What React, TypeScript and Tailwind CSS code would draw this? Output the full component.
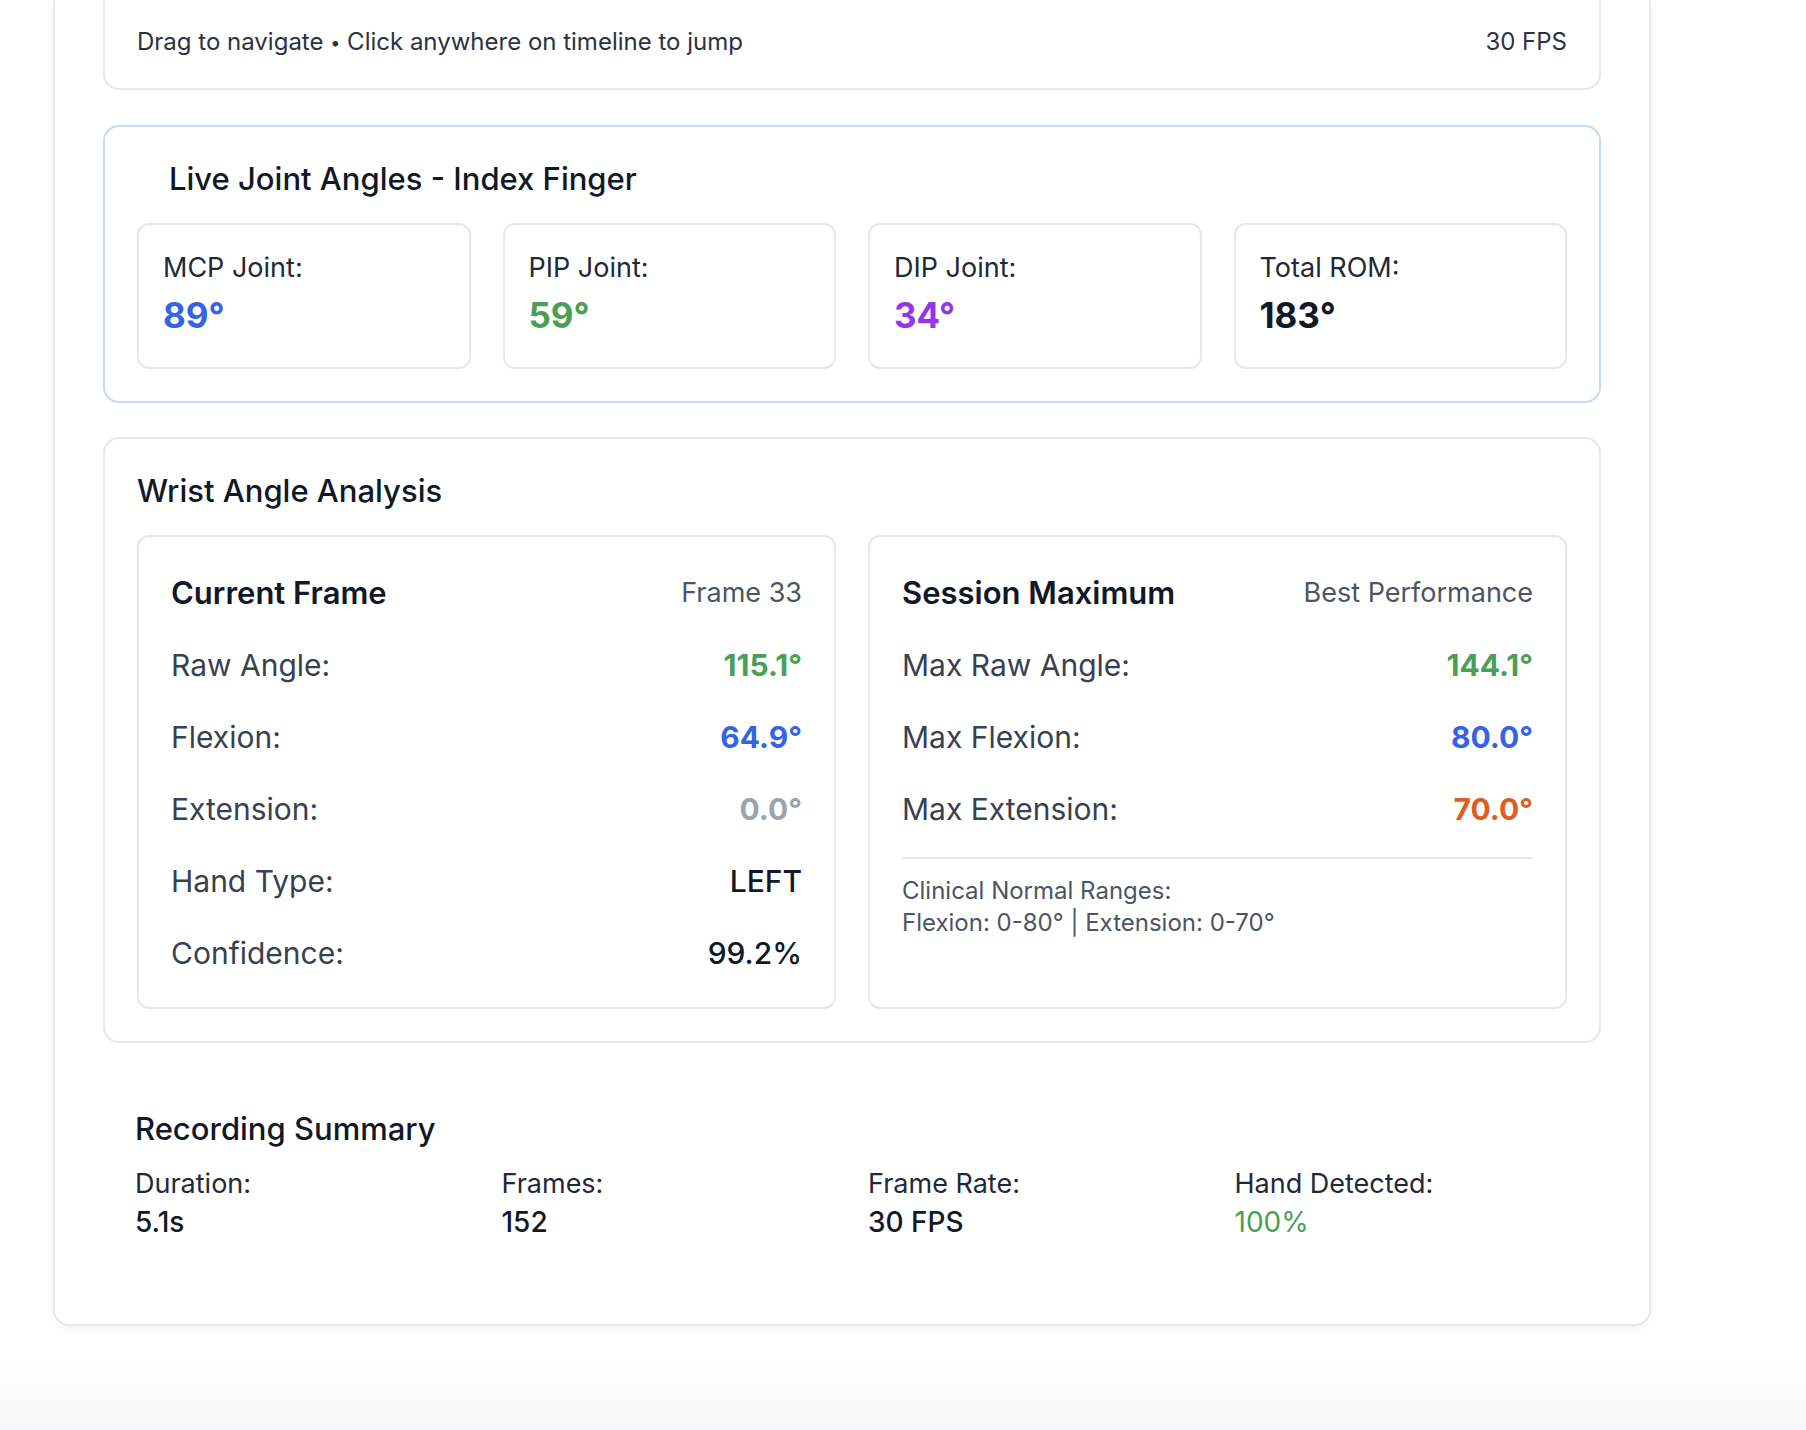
const font = { fontFamily: "Inter, 'Noto Sans', sans-serif" };

const joints = [
    { label: "MCP Joint:", value: "89°", color: "text-[#3563e6]" },
    { label: "PIP Joint:", value: "59°", color: "text-[#4a9f56]" },
    { label: "DIP Joint:", value: "34°", color: "text-[#9336ea]" },
    { label: "Total ROM:", value: "183°", color: "text-[#111827]" },
];

const current = [
    { label: "Raw Angle:", value: "115.1°", cls: "font-bold text-[#4a9f56]" },
    { label: "Flexion:", value: "64.9°", cls: "font-bold text-[#3563e6]" },
    { label: "Extension:", value: "0.0°", cls: "font-bold text-[#9ca3af]" },
    { label: "Hand Type:", value: "LEFT", cls: "font-medium text-[#111827]" },
    { label: "Confidence:", value: "99.2%", cls: "font-medium text-[#111827]" },
];

const session = [
    { label: "Max Raw Angle:", value: "144.1°", cls: "text-[#4a9f56]" },
    { label: "Max Flexion:", value: "80.0°", cls: "text-[#3563e6]" },
    { label: "Max Extension:", value: "70.0°", cls: "text-[#e05d1e]" },
];

const summary = [
    { label: "Duration:", value: "5.1s", cls: "font-medium text-[#111827]" },
    { label: "Frames:", value: "152", cls: "font-medium text-[#111827]" },
    { label: "Frame Rate:", value: "30 FPS", cls: "font-medium text-[#111827]" },
    { label: "Hand Detected:", value: "100%", cls: "text-[#4a9f56]" },
];

function StatRow({ label, value, cls }: { label: string; value: string; cls: string }) {
    return (
        <div className="flex items-center justify-between h-[48px]">
            <span className="text-[30px] text-[#374151]">{label}</span>
            <span className={`text-[30px] ${cls}`}>{value}</span>
        </div>
    );
}

export default function App() {
    return (
        <div
            className="min-h-[1430px] bg-linear-to-b from-white from-95% to-[#f7f7f9]"
            style={font}
        >
            <div className="ml-[53px] w-[1598px] bg-white border-2 border-t-0 border-[#e8e8ec] rounded-b-[16px] shadow-[0_3px_8px_rgba(0,0,0,0.05)] px-12 pb-12 flex flex-col">
                {/* Timeline footer (card scrolled off the top) */}
                <div className="border-2 border-t-0 border-[#e5e7eb] rounded-b-[16px] px-8 pt-[26px] pb-[30px] flex items-center justify-between text-[24px] leading-[32px] text-[#2b3240]">
                    <span>
                        Drag to navigate <span className="text-[18px] leading-none align-[1px]">•</span> Click anywhere on timeline to jump
                    </span>
                    <span>30 FPS</span>
                </div>

                {/* Live joint angles */}
                <div className="mt-[35px] border-2 border-[#c3dbfa] rounded-[16px] p-8">
                    <h3 className="pl-8 text-[31px] leading-[40px] font-medium text-[#111827] mb-6">
                        Live Joint Angles - Index Finger
                    </h3>
                    <div className="grid grid-cols-4 gap-8">
                        {joints.map((j) => (
                            <div key={j.label} className="border-2 border-[#e5e7eb] rounded-[12px] p-6">
                                <div className="text-[27px] leading-[38px] text-[#1f2937]">{j.label}</div>
                                <div className={`text-[35px] leading-[56px] font-bold ${j.color}`}>{j.value}</div>
                            </div>
                        ))}
                    </div>
                </div>

                {/* Wrist angle analysis */}
                <div className="mt-[34px] border-2 border-[#e5e7eb] rounded-[16px] p-8">
                    <h3 className="text-[31px] leading-[40px] font-medium text-[#111827] mb-6">
                        Wrist Angle Analysis
                    </h3>
                    <div className="grid grid-cols-2 gap-8">
                        <div className="border-2 border-[#e5e7eb] rounded-[12px] px-8 pt-8 pb-[30px]">
                            <div className="flex items-center justify-between h-[48px] mb-6">
                                <span className="text-[31px] font-semibold text-[#111827]">Current Frame</span>
                                <span className="text-[27px] text-[#4b5563]">Frame 33</span>
                            </div>
                            <div className="flex flex-col gap-6">
                                {current.map((r) => (
                                    <StatRow key={r.label} {...r} />
                                ))}
                            </div>
                        </div>

                        <div className="border-2 border-[#e5e7eb] rounded-[12px] px-8 pt-8 pb-[30px]">
                            <div className="flex items-center justify-between h-[48px] mb-6">
                                <span className="text-[31px] font-semibold text-[#111827]">Session Maximum</span>
                                <span className="text-[27px] text-[#4b5563]">Best Performance</span>
                            </div>
                            <div className="flex flex-col gap-6">
                                {session.map((r) => (
                                    <StatRow key={r.label} label={r.label} value={r.value} cls={`font-bold ${r.cls}`} />
                                ))}
                            </div>
                            <div className="mt-6 pt-4 border-t-2 border-[#e5e7eb] text-[24px] leading-[32px] text-[#4b5563]">
                                <p>Clinical Normal Ranges:</p>
                                <p>Flexion: 0-80° | Extension: 0-70°</p>
                            </div>
                        </div>
                    </div>
                </div>

                {/* Recording summary */}
                <div className="mt-8 px-8 pt-8 pb-[34px]">
                    <h3 className="text-[31px] leading-[44px] font-medium text-[#111827] mb-[15px]">
                        Recording Summary
                    </h3>
                    <div className="grid grid-cols-4 gap-8">
                        {summary.map((s) => (
                            <div key={s.label}>
                                <div className="text-[27px] leading-[36px] text-[#1f2937]">{s.label}</div>
                                <div className={`text-[28px] leading-[40px] ${s.cls}`}>{s.value}</div>
                            </div>
                        ))}
                    </div>
                </div>
            </div>
        </div>
    );
}
